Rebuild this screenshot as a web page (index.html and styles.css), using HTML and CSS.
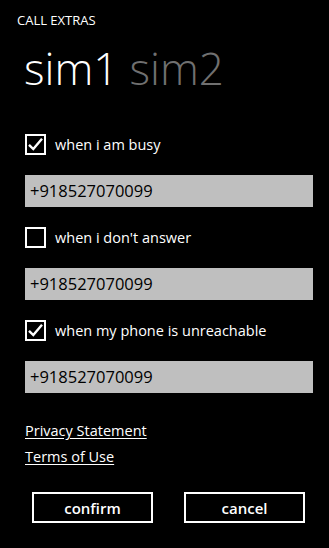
FILE: index.html
```html
<!DOCTYPE html>
<html>
<head>
<meta charset="utf-8">
<link rel="stylesheet" href="styles.css">
</head>
<body>
<div class="page">
  <div class="app-title">CALL EXTRAS</div>
  <div class="pivot">
    <span class="pivot-item active">sim1</span>
    <span class="pivot-item">sim2</span>
  </div>
  <div class="form">
    <div class="group">
      <label class="check-row">
        <span class="box checked"><svg viewBox="0 0 17 17" width="17" height="17"><path d="M2 8.8 L6.3 13 L15 2.8" fill="none" stroke="#fff" stroke-width="2.4"/></svg></span>
        <span class="check-label">when i am busy</span>
      </label>
      <div class="field">+918527070099</div>
    </div>
    <div class="group">
      <label class="check-row">
        <span class="box"></span>
        <span class="check-label">when i don't answer</span>
      </label>
      <div class="field">+918527070099</div>
    </div>
    <div class="group">
      <label class="check-row">
        <span class="box checked"><svg viewBox="0 0 17 17" width="17" height="17"><path d="M2 8.8 L6.3 13 L15 2.8" fill="none" stroke="#fff" stroke-width="2.4"/></svg></span>
        <span class="check-label">when my phone is unreachable</span>
      </label>
      <div class="field">+918527070099</div>
    </div>
  </div>
  <div class="links">
    <a class="link">Privacy Statement</a>
    <a class="link">Terms of Use</a>
  </div>
  <div class="buttons">
    <div class="btn">confirm</div>
    <div class="btn">cancel</div>
  </div>
</div>
</body>
</html>
```
FILE: styles.css
```css
html, body {
  margin: 0;
  padding: 0;
  background: #000;
}
body {
  width: 329px;
  height: 548px;
  overflow: hidden;
  font-family: "Open Sans", "Noto Sans", sans-serif;
  color: #fff;
}
.page {
  padding: 11px 0 0 0;
}
.app-title {
  padding-left: 17px;
  font-size: 13px;
  line-height: 18px;
  letter-spacing: 0;
}
.pivot {
  display: flex;
  gap: 11px;
  padding-left: 24px;
  margin-top: 17px;
  font-size: 44px;
  line-height: 44px;
  font-weight: 300;
}
.pivot-item {
  color: #707070;
}
.pivot-item.active {
  color: #fff;
}
.form {
  margin-top: 44px;
  padding: 0 16px 0 25px;
  display: flex;
  flex-direction: column;
  gap: 20px;
}
.group {
  display: flex;
  flex-direction: column;
  gap: 20px;
}
.check-row {
  display: flex;
  align-items: center;
  gap: 9px;
  height: 21px;
}
.box {
  box-sizing: border-box;
  width: 21px;
  height: 21px;
  border: 2px solid #fff;
  display: flex;
  align-items: center;
  justify-content: center;
}
.check-label {
  font-size: 14.5px;
}
.field {
  height: 32px;
  background: #bfbfbf;
  color: #000;
  font-size: 16.5px;
  line-height: 32px;
  padding-left: 5px;
}
.links {
  margin-top: 28px;
  padding-left: 25px;
  display: flex;
  flex-direction: column;
  gap: 6px;
}
.link {
  font-size: 14.5px;
  line-height: 20px;
  text-decoration: underline;
  text-underline-offset: 2px;
  color: #fff;
  align-self: flex-start;
}
.buttons {
  margin-top: 25px;
  display: flex;
  justify-content: space-between;
  padding: 0 24px 0 32px;
}
.btn {
  box-sizing: border-box;
  width: 121px;
  height: 31px;
  border: 2px solid #fff;
  display: flex;
  align-items: center;
  justify-content: center;
  font-size: 15px;
  font-weight: 600;
}
```
